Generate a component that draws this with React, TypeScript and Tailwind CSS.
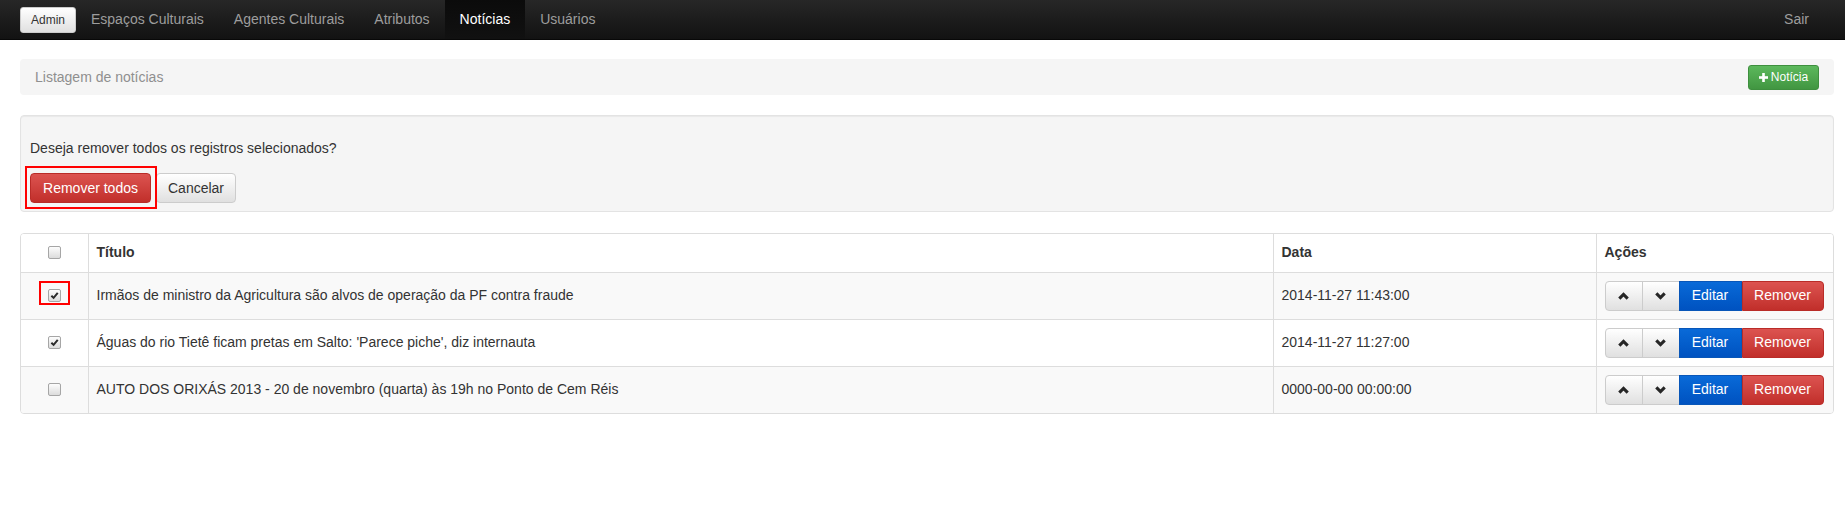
import React from 'react';

const font = { fontFamily: '"Liberation Sans", Arial, sans-serif' };

interface Noticia {
  titulo: string;
  data: string;
  checked: boolean;
  marked?: boolean;
}

const noticias: Noticia[] = [
  {
    titulo: 'Irmãos de ministro da Agricultura são alvos de operação da PF contra fraude',
    data: '2014-11-27 11:43:00',
    checked: true,
    marked: true,
  },
  {
    titulo: "Águas do rio Tietê ficam pretas em Salto: 'Parece piche', diz internauta",
    data: '2014-11-27 11:27:00',
    checked: true,
  },
  {
    titulo: 'AUTO DOS ORIXÁS 2013 - 20 de novembro (quarta) às 19h no Ponto de Cem Réis',
    data: '0000-00-00 00:00:00',
    checked: false,
  },
];

const navLinks = ['Espaços Culturais', 'Agentes Culturais', 'Atributos', 'Notícias', 'Usuários'];

const Checkbox: React.FC<{ checked: boolean }> = ({ checked }) => (
  <span className="flex h-[13px] w-[13px] items-center justify-center rounded-[2px] border border-[#a6a6a6] bg-gradient-to-b from-[#fdfdfd] to-[#dcdcdc]">
    {checked && (
      <svg width="9" height="9" viewBox="0 0 10 10">
        <path d="M1.5 5.2 L4 7.6 L8.6 2" fill="none" stroke="#2b2b2b" strokeWidth="2.2" />
      </svg>
    )}
  </span>
);

const Chevron: React.FC<{ up?: boolean }> = ({ up }) => (
  <svg width="11" height="8" viewBox="0 0 11 8">
    <path
      d={up ? 'M1.3 6.6 L5.5 2.4 L9.7 6.6' : 'M1.3 1.4 L5.5 5.6 L9.7 1.4'}
      fill="none"
      stroke="#262626"
      strokeWidth="3.1"
    />
  </svg>
);

const Actions: React.FC = () => (
  <div className="flex h-[30px] text-[14px]">
    <button className="flex w-[38px] items-center justify-center rounded-l-[4px] border border-[#ccc] bg-gradient-to-b from-white to-[#e0e0e0]">
      <Chevron up />
    </button>
    <button className="ml-[-1px] flex w-[38px] items-center justify-center border border-[#ccc] bg-gradient-to-b from-white to-[#e0e0e0]">
      <Chevron />
    </button>
    <button className="ml-[-1px] w-[63px] border border-[#0856b8] bg-gradient-to-b from-[#0a6ad8] to-[#0052c0] text-white">
      Editar
    </button>
    <button className="w-[82px] rounded-r-[4px] border border-[#b92c28] bg-gradient-to-b from-[#dc5350] to-[#c12e2a] text-white">
      Remover
    </button>
  </div>
);

export default function App() {
  return (
    <div className="min-h-screen bg-white text-[14px] text-[#333]" style={font}>
      {/* navbar */}
      <div className="flex h-[40px] items-stretch border-b border-[#080808] bg-gradient-to-b from-[#272727] to-[#121212]">
        <div className="flex items-center pl-[20px]">
          <button className="h-[26px] w-[56px] rounded-[3px] border border-[#ccc] bg-gradient-to-b from-white to-[#e0e0e0] text-[12px] text-[#333]">
            Admin
          </button>
        </div>
        {navLinks.map((l) => (
          <a
            key={l}
            className={`flex items-center px-[15px] ${
              l === 'Notícias' ? 'bg-gradient-to-b from-[#0b0b0b] to-[#111] text-white' : 'text-[#9d9d9d]'
            }`}
          >
            {l}
          </a>
        ))}
        <div className="flex-1" />
        <a className="flex items-center pr-[36px] text-[#9d9d9d]">Sair</a>
      </div>

      <div className="pl-[20px] pr-[11px]">
        {/* breadcrumb */}
        <div className="mt-[19px] flex h-[36px] items-center justify-between rounded-[4px] bg-[#f5f5f5] pl-[15px] pr-[15px]">
          <span className="text-[#8f8f8f]">Listagem de notícias</span>
          <button className="flex h-[25px] w-[71px] items-center justify-center gap-[3px] rounded-[3px] border border-[#3e8f3e] bg-gradient-to-b from-[#5cb85c] to-[#419641] text-[12px] text-white">
            <svg width="9" height="9" viewBox="0 0 9 9">
              <rect x="3.2" y="0" width="2.6" height="9" fill="white" />
              <rect x="0" y="3.2" width="9" height="2.6" fill="white" />
            </svg>
            Notícia
          </button>
        </div>

        {/* confirmation */}
        <div className="mt-[20px] rounded-[4px] border border-[#e3e3e3] bg-[#f5f5f5] pb-[8px] pl-[9px] pt-[22px] shadow-[inset_0_1px_1px_rgba(0,0,0,0.05)]">
          <p className="leading-[20px]">Deseja remover todos os registros selecionados?</p>
          <div className="mt-[15px] flex gap-[5px]">
            <div className="relative">
              <button className="h-[30px] w-[121px] rounded-[4px] border border-[#b92c28] bg-gradient-to-b from-[#dc5350] to-[#c12e2a] text-white">
                Remover todos
              </button>
              <span className="absolute left-[-5px] top-[-7px] h-[43px] w-[132px] border-2 border-[#ff0000]" />
            </div>
            <button className="h-[30px] w-[80px] rounded-[4px] border border-[#ccc] bg-gradient-to-b from-white to-[#e0e0e0]">
              Cancelar
            </button>
          </div>
        </div>

        {/* table */}
        <div className="mt-[21px] overflow-hidden rounded-[4px] border border-[#ddd]">
          <table className="w-full table-fixed border-collapse">
            <colgroup>
              <col className="w-[67px]" />
              <col />
              <col className="w-[323px]" />
              <col className="w-[237px]" />
            </colgroup>
            <thead>
              <tr className="h-[38px] bg-white">
                <th className="border-b border-[#ddd] align-middle">
                  <div className="flex justify-center">
                    <Checkbox checked={false} />
                  </div>
                </th>
                <th className="border-b border-l border-[#ddd] px-[8px] text-left font-bold">Título</th>
                <th className="border-b border-l border-[#ddd] px-[8px] text-left font-bold">Data</th>
                <th className="border-b border-l border-[#ddd] px-[8px] text-left font-bold">Ações</th>
              </tr>
            </thead>
            <tbody>
              {noticias.map((n, i) => (
                <tr key={i} className={`h-[47px] ${i % 2 === 0 ? 'bg-[#f9f9f9]' : 'bg-white'}`}>
                  <td className="border-t border-[#ddd] align-middle">
                    <div className="flex justify-center">
                      <div className="relative">
                        <Checkbox checked={n.checked} />
                        {n.marked && (
                          <span className="absolute left-[-9px] top-[-8px] h-[24px] w-[31px] border-2 border-[#ff0000]" />
                        )}
                      </div>
                    </div>
                  </td>
                  <td className="border-l border-t border-[#ddd] px-[8px] align-middle">{n.titulo}</td>
                  <td className="border-l border-t border-[#ddd] px-[8px] align-middle">{n.data}</td>
                  <td className="border-l border-t border-[#ddd] px-[8px] align-middle">
                    <Actions />
                  </td>
                </tr>
              ))}
            </tbody>
          </table>
        </div>
      </div>
    </div>
  );
}
